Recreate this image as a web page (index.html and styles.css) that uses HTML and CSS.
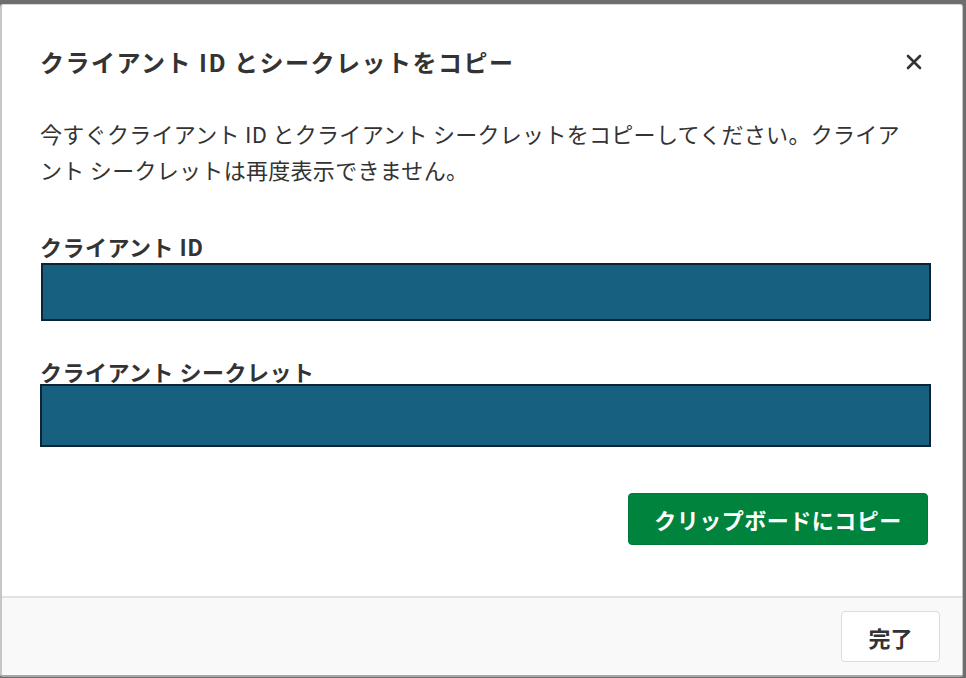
FILE: index.html
```html
<!DOCTYPE html>
<html lang="ja">
<head>
<meta charset="utf-8">
<link rel="stylesheet" href="styles.css">
</head>
<body>
<div class="backdrop">
  <div class="modal">
    <div class="modal-header">
      <h1 class="modal-title">クライアント ID とシークレットをコピー</h1>
      <button class="close-btn" aria-label="閉じる">
        <svg width="16" height="16" viewBox="0 0 16 16"><path d="M2 2 L14 14 M14 2 L2 14" stroke="#333" stroke-width="2.6" stroke-linecap="round"/></svg>
      </button>
    </div>
    <div class="modal-body">
      <p class="desc">今すぐクライアント ID とクライアント シークレットをコピーしてください。クライアント シークレットは再度表示できません。</p>
      <div class="field">
        <div class="field-label">クライアント ID</div>
        <div class="field-value field-id"></div>
      </div>
      <div class="field field-secret">
        <div class="field-label">クライアント シークレット</div>
        <div class="field-value field-sec"></div>
      </div>
      <div class="actions">
        <button class="copy-btn">クリップボードにコピー</button>
      </div>
    </div>
    <div class="modal-footer">
      <button class="done-btn">完了</button>
    </div>
  </div>
</div>
</body>
</html>
```

FILE: styles.css
```css
html, body {
  margin: 0;
  padding: 0;
}
body {
  background: #6e6e6e;
  width: 966px;
  height: 678px;
  overflow: hidden;
  font-family: "Noto Sans CJK JP", "Noto Sans", sans-serif;
  color: #333;
}
.backdrop {
  padding-top: 4px;
}
.modal {
  width: 963px;
  height: 673px;
  background: #fff;
  border-left: 2px solid #c6c6c6;
  border-bottom: 2px solid #a8a8a8;
  border-right: 1px solid #c6c6c6;
  border-top: 1px solid #d8d8d8;
  border-radius: 3px;
  display: flex;
  flex-direction: column;
  box-sizing: border-box;
}
.modal-header {
  display: flex;
  align-items: center;
  justify-content: space-between;
  padding: 37px 40px 0 38px;
  height: 40px;
}
.modal-title {
  margin: 0;
  font-size: 24px;
  font-weight: 700;
  line-height: 40px;
  color: #333;
  letter-spacing: 1.5px;
}
.close-btn {
  border: 0;
  background: none;
  padding: 0;
  width: 16px;
  height: 16px;
  display: flex;
}
.modal-body {
  flex: 1;
  padding: 0 31px 0 38px;
}
.desc {
  margin: 33px 0 0 0;
  font-size: 22px;
  line-height: 36px;
  color: #333;
  width: 874px;
  letter-spacing: 0.3px;
}
.field {
  margin-top: 46px;
}
.field-secret {
  margin-top: 37px;
}
.field-label {
  font-size: 22px;
  font-weight: 700;
  line-height: 26px;
  color: #333;
  letter-spacing: 0.5px;
}
.field-value {
  background: #17607f;
  border: 2px solid #0b2436;
  box-sizing: border-box;
  margin-top: 4px;
}
.field-id {
  height: 58px;
  margin-left: 1px;
}
.field-sec {
  height: 63px;
  margin-top: 0;
}
.actions {
  display: flex;
  justify-content: flex-end;
  margin-top: 46px;
  padding-right: 3px;
}
.copy-btn {
  background: #00843d;
  color: #fff;
  border: 1px solid #00793a;
  border-radius: 4px;
  width: 300px;
  height: 52px;
  font-family: inherit;
  font-size: 22px;
  font-weight: 700;
  letter-spacing: 0.5px;
}
.modal-footer {
  height: 79px;
  background: #f9f9f9;
  border-top: 2px solid #e2e2e2;
  display: flex;
  align-items: center;
  justify-content: flex-end;
  padding-right: 22px;
  box-sizing: border-box;
}
.done-btn {
  width: 99px;
  height: 51px;
  background: #fff;
  border: 1px solid #dcdcdc;
  border-radius: 4px;
  font-family: inherit;
  font-size: 22px;
  font-weight: 700;
  color: #333;
}
```
